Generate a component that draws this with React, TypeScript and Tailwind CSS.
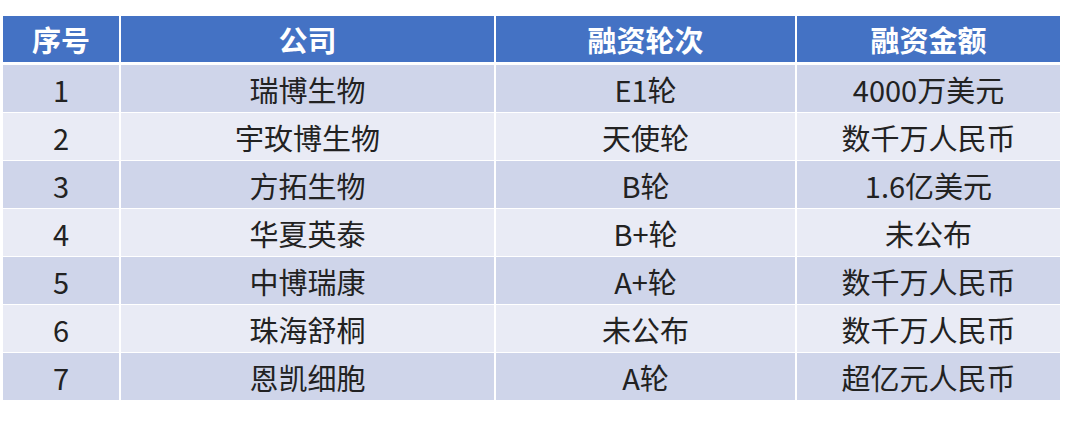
import React from "react";

const rows: [string, string, string, string][] = [
  ["1", "瑞博生物", "E1轮", "4000万美元"],
  ["2", "宇玫博生物", "天使轮", "数千万人民币"],
  ["3", "方拓生物", "B轮", "1.6亿美元"],
  ["4", "华夏英泰", "B+轮", "未公布"],
  ["5", "中博瑞康", "A+轮", "数千万人民币"],
  ["6", "珠海舒桐", "未公布", "数千万人民币"],
  ["7", "恩凯细胞", "A轮", "超亿元人民币"],
];

const cols = "grid grid-cols-[116px_373px_299px_263px] gap-x-[2px]";

export default function App() {
  return (
    <div
      className="w-[1080px] h-[434px] bg-white pt-[16px] pl-[3px]"
      style={{ fontFamily: '"Noto Sans CJK SC", "Noto Sans", sans-serif' }}
    >
      <div className={`${cols} h-[46px] mb-[3px]`}>
        {["序号", "公司", "融资轮次", "融资金额"].map((h) => (
          <div
            key={h}
            className="bg-[#4472c4] text-white font-bold text-[29px] flex items-center justify-center leading-none"
          >
            {h}
          </div>
        ))}
      </div>
      <div className="flex flex-col gap-y-[1px]">
        {rows.map((r, i) => (
          <div key={i} className={`${cols} h-[47px]`}>
            {r.map((c, j) => (
              <div
                key={j}
                className={`${
                  i % 2 === 0 ? "bg-[#cfd5ea]" : "bg-[#e9ebf5]"
                } text-[#222222] text-[29px] flex items-center justify-center leading-none pt-[1px]`}
              >
                {c}
              </div>
            ))}
          </div>
        ))}
      </div>
    </div>
  );
}
